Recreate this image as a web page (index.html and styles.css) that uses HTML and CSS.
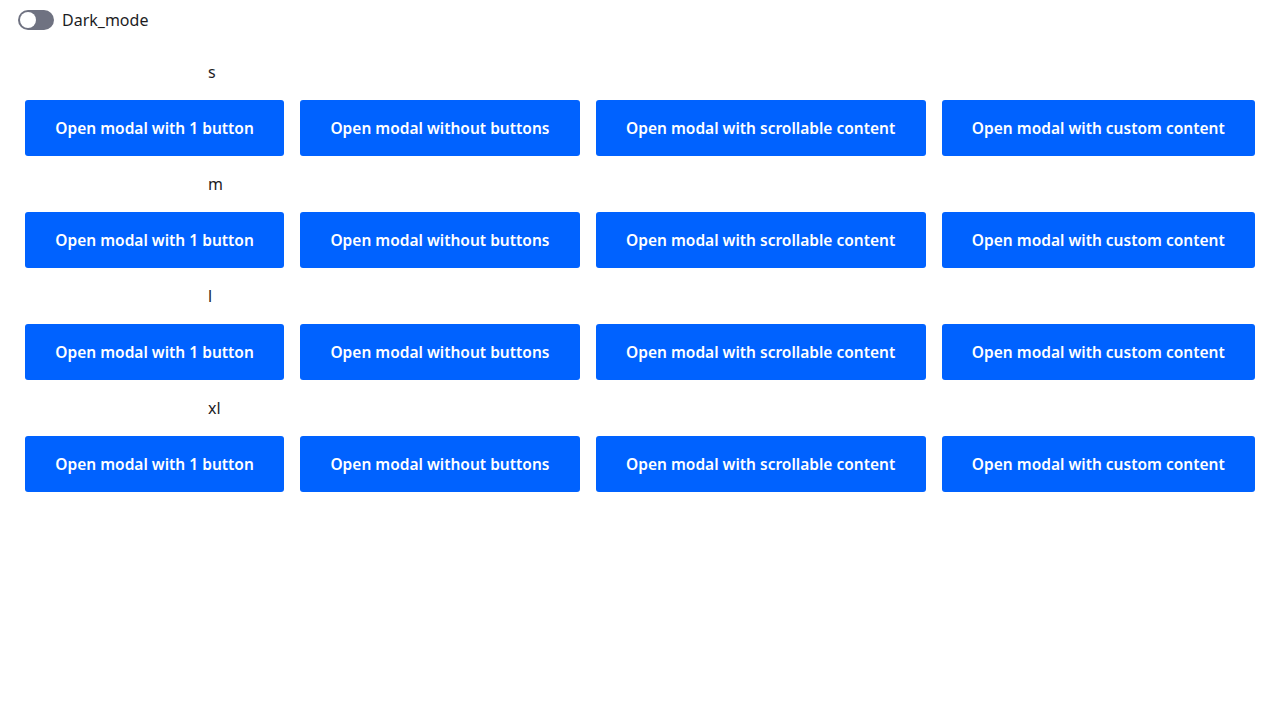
FILE: index.html
```html
<!DOCTYPE html>
<html>
<head>
<meta charset="utf-8">
<link rel="stylesheet" href="styles.css">
</head>
<body>
<div class="topbar">
  <span class="toggle"><span class="knob"></span></span>
  <span class="toggle-label">Dark_mode</span>
</div>
<main class="content">
  <section class="group">
    <div class="size-label">s</div>
    <div class="row">
      <button class="btn">Open modal with 1 button</button>
      <button class="btn">Open modal without buttons</button>
      <button class="btn">Open modal with scrollable content</button>
      <button class="btn">Open modal with custom content</button>
    </div>
  </section>
  <section class="group">
    <div class="size-label">m</div>
    <div class="row">
      <button class="btn">Open modal with 1 button</button>
      <button class="btn">Open modal without buttons</button>
      <button class="btn">Open modal with scrollable content</button>
      <button class="btn">Open modal with custom content</button>
    </div>
  </section>
  <section class="group">
    <div class="size-label">l</div>
    <div class="row">
      <button class="btn">Open modal with 1 button</button>
      <button class="btn">Open modal without buttons</button>
      <button class="btn">Open modal with scrollable content</button>
      <button class="btn">Open modal with custom content</button>
    </div>
  </section>
  <section class="group">
    <div class="size-label">xl</div>
    <div class="row">
      <button class="btn">Open modal with 1 button</button>
      <button class="btn">Open modal without buttons</button>
      <button class="btn">Open modal with scrollable content</button>
      <button class="btn">Open modal with custom content</button>
    </div>
  </section>
</main>
</body>
</html>
```
FILE: styles.css
```css
html, body {
  margin: 0;
  padding: 0;
  background: #ffffff;
  font-family: "Noto Sans", "Open Sans", sans-serif;
  color: #1d1d1f;
}
.topbar {
  display: flex;
  align-items: center;
  gap: 8px;
  padding: 10px 18px 0;
  height: 20px;
}
.toggle {
  width: 36px;
  height: 20px;
  border-radius: 10px;
  background: #6f7281;
  display: flex;
  align-items: center;
  padding-left: 2px;
  box-sizing: border-box;
}
.knob {
  width: 16px;
  height: 16px;
  border-radius: 50%;
  background: #ffffff;
}
.toggle-label {
  font-size: 16px;
  line-height: 20px;
}
.content {
  padding: 30px 25px 0;
  display: flex;
  flex-direction: column;
  gap: 16px;
}
.group {
  display: flex;
  flex-direction: column;
  gap: 16px;
}
.size-label {
  padding-left: 183px;
  font-size: 16px;
  line-height: 24px;
  height: 24px;
}
.row {
  display: flex;
  gap: 16px;
}
.btn {
  flex: 1 1 auto;
  height: 56px;
  border: none;
  border-radius: 3px;
  background: #0062ff;
  color: #ffffff;
  font-family: "Noto Sans", "Open Sans", sans-serif;
  font-weight: 600;
  font-size: 15.5px;
  padding: 0 24px;
  white-space: nowrap;
}
```
